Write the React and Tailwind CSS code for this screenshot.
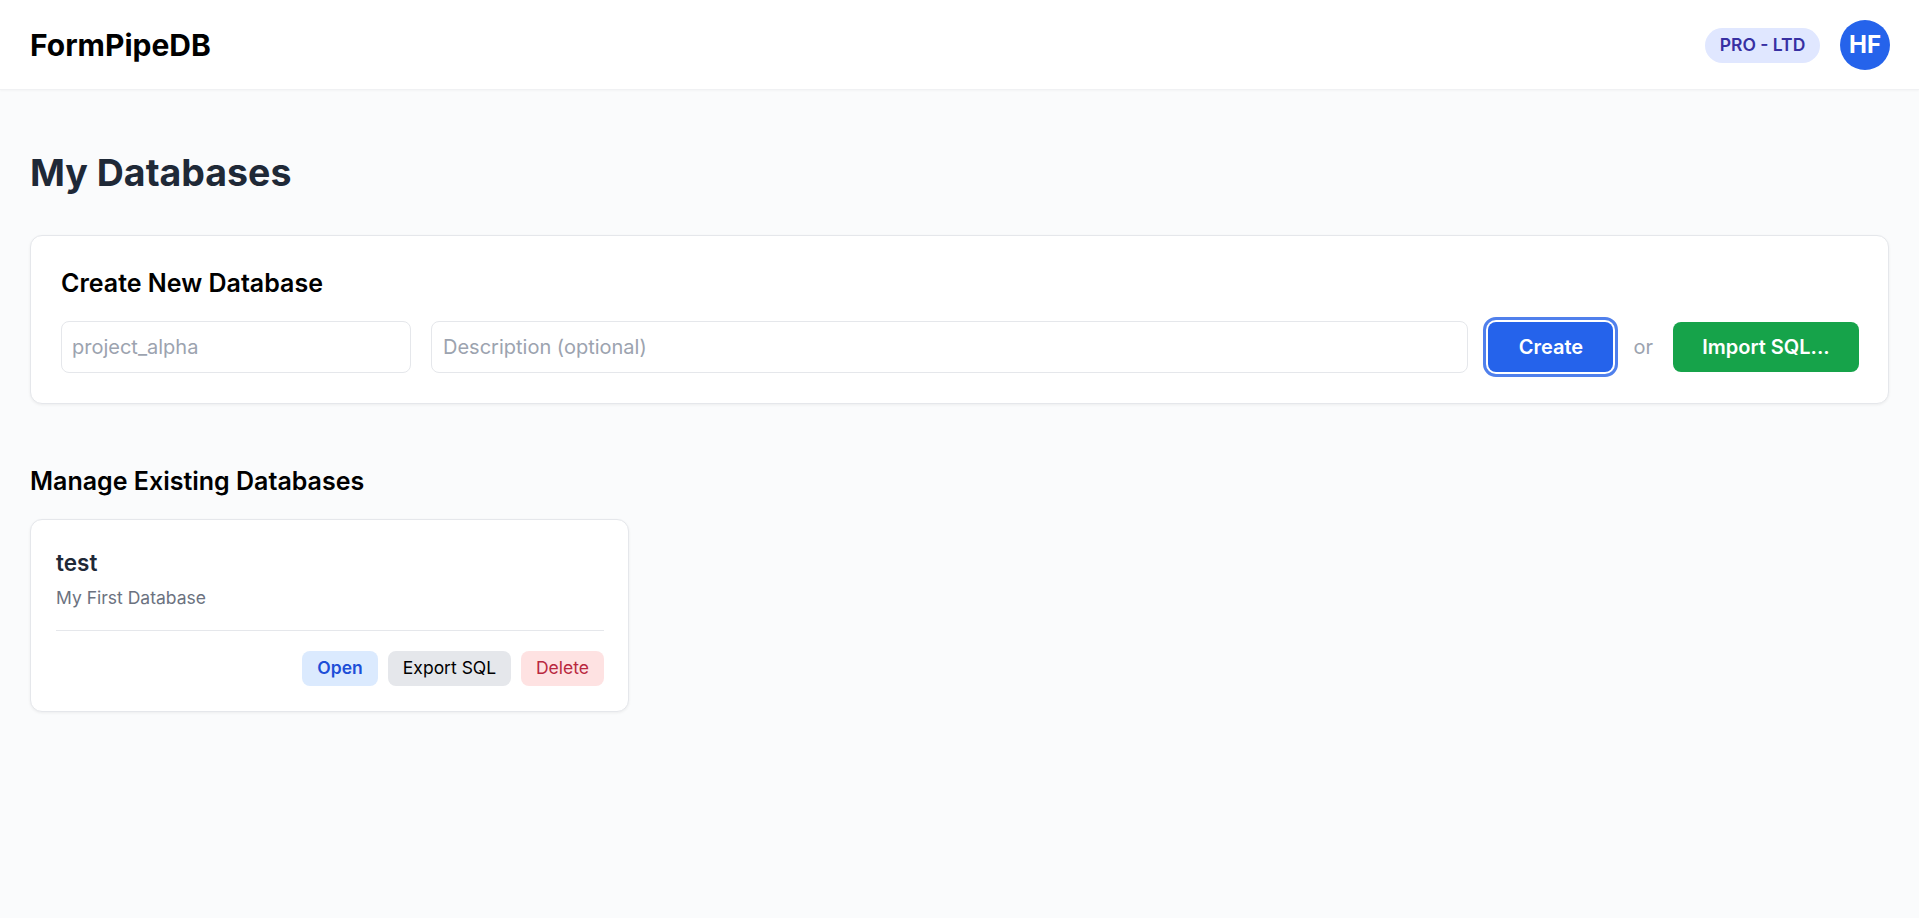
export default function App() {
  return (
    <div className="min-h-screen bg-[#fafbfc] font-['Inter',sans-serif] text-black">
      <header className="h-[90px] pt-px flex items-center justify-between pl-[30px] pr-[29px] bg-white border-b border-[#f0f1f3] shadow-[0_1px_2px_rgba(0,0,0,0.03)]">
        <div className="text-[30px] font-bold">FormPipeDB</div>
        <div className="flex items-center gap-5">
          <span className="h-[35px] w-[115px] flex items-center justify-center rounded-full bg-[#e0e7ff] text-[#3730a3] text-[17.5px] font-semibold">PRO - LTD</span>
          <div className="w-[50px] h-[50px] rounded-full bg-[#2563eb] text-white flex items-center justify-center text-[24px] font-bold">HF</div>
        </div>
      </header>

      <main className="px-[30px] pt-[56px]">
        <h1 className="text-[37.5px] leading-[54px] font-bold text-[#1f2937] mb-[35px]">My Databases</h1>

        <section className="bg-white border border-[#e5e7eb] rounded-xl pt-[29px] pb-[30px] pl-[30px] pr-[29px] shadow-[0_1px_3px_rgba(0,0,0,0.06)]">
          <h2 className="text-[25px] leading-[36px] font-semibold mb-[20px]">Create New Database</h2>
          <div className="flex items-center">
            <input placeholder="project_alpha" className="w-[350px] h-[52px] px-[10px] text-[20px] bg-white border border-[#e5e7eb] rounded-lg placeholder:text-[#9ca3af] outline-none" />
            <input placeholder="Description (optional)" className="ml-[20px] flex-1 h-[52px] pl-[11px] pr-[10px] text-[20px] bg-white border border-[#e5e7eb] rounded-lg placeholder:text-[#9ca3af] outline-none" />
            <button className="ml-[20px] w-[125px] h-[50px] rounded-lg bg-[#2563eb] text-white text-[20px] font-semibold outline-[3px] outline-offset-2 outline-[#5080ec]">Create</button>
            <span className="mx-[20px] text-[20px] text-[#9ca3af]">or</span>
            <button className="w-[186px] h-[50px] rounded-lg bg-[#16a34a] text-white text-[20px] font-semibold">Import SQL...</button>
          </div>
        </section>

        <h2 className="mt-[59px] mb-[20px] text-[25px] leading-[36px] font-semibold">Manage Existing Databases</h2>

        <div className="w-[599px] bg-white border border-[#e5e7eb] rounded-xl pt-[25px] pb-[25px] pl-[25px] pr-[24px] shadow-[0_1px_3px_rgba(0,0,0,0.06)]">
          <div className="text-[22.5px] leading-[36px] font-semibold text-[#1f2937]">test</div>
          <div className="text-[17.5px] leading-[26px] mt-[4px] text-[#6b7280]">My First Database</div>
          <div className="mt-[19px] pt-[20px] border-t border-[#e5e7eb] flex justify-end gap-[10px]">
            <button className="h-[35px] w-[76px] rounded-lg bg-[#dbeafe] text-[#1d4ed8] text-[17.5px] font-semibold">Open</button>
            <button className="h-[35px] w-[123px] rounded-lg bg-[#e5e7eb] text-black text-[17.5px]">Export SQL</button>
            <button className="h-[35px] w-[83px] rounded-lg bg-[#fee2e2] text-[#b9283f] text-[17.5px]">Delete</button>
          </div>
        </div>
      </main>
    </div>
  );
}
